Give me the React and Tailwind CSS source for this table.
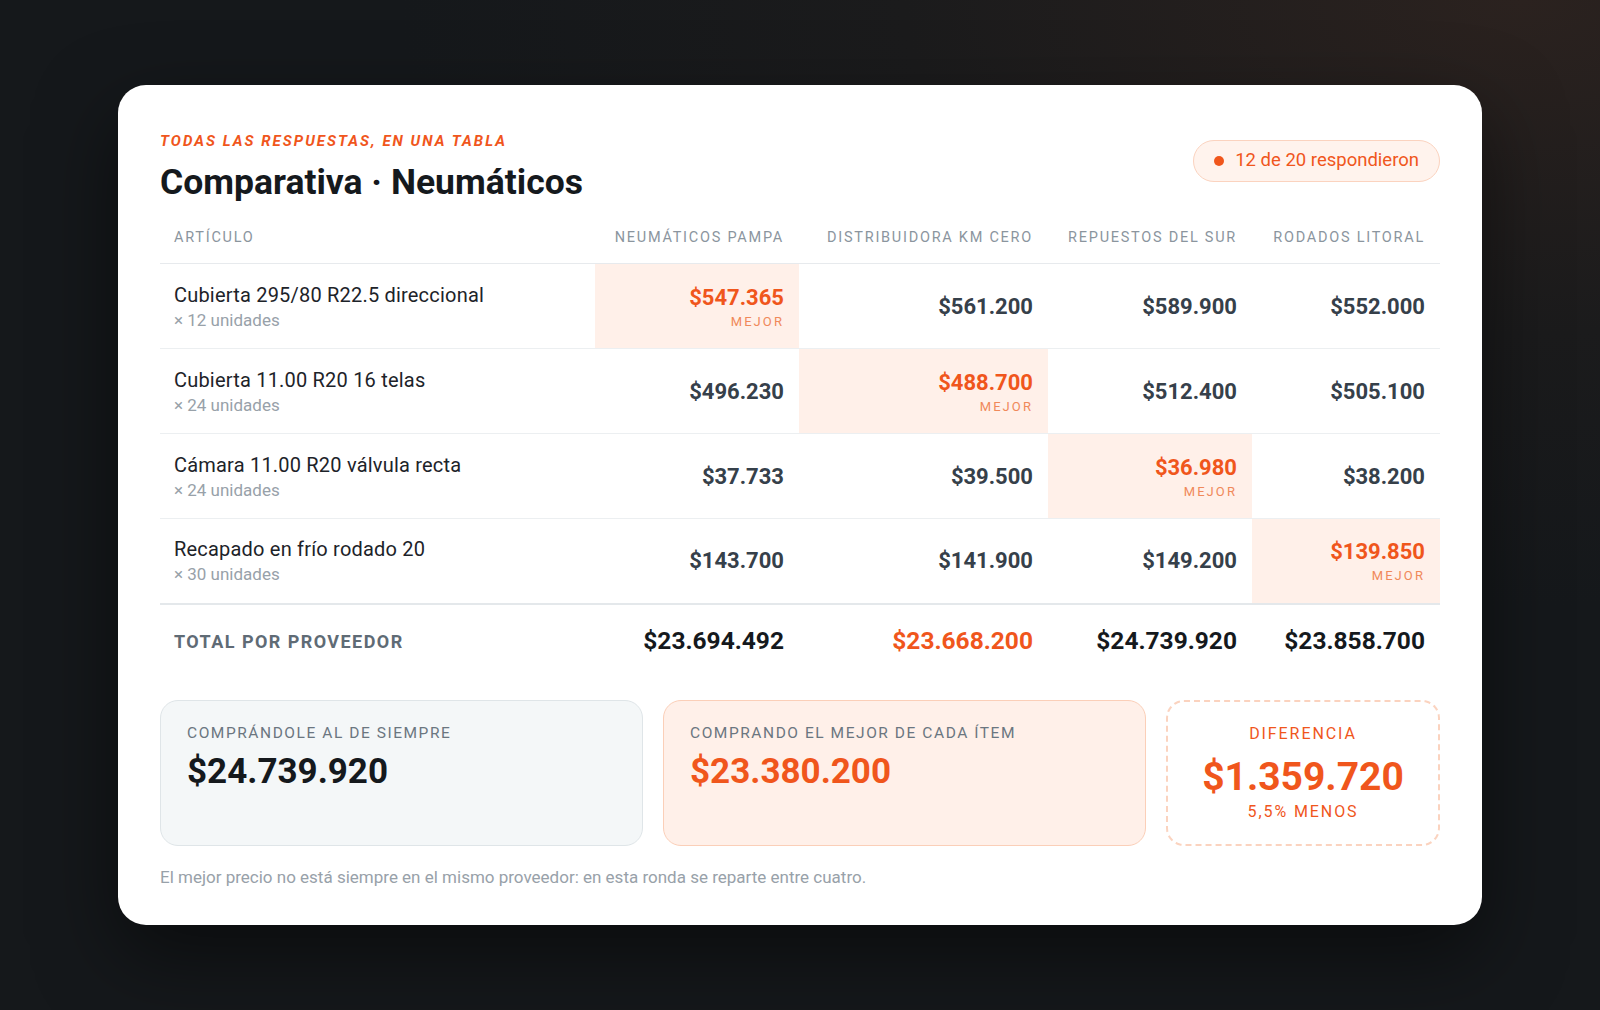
const suppliers = ['Neumáticos Pampa', 'Distribuidora KM Cero', 'Repuestos del Sur', 'Rodados Litoral'];

const rows = [
  { name: 'Cubierta 295/80 R22.5 direccional', qty: '× 12 unidades', prices: ['$547.365', '$561.200', '$589.900', '$552.000'], best: 0 },
  { name: 'Cubierta 11.00 R20 16 telas', qty: '× 24 unidades', prices: ['$496.230', '$488.700', '$512.400', '$505.100'], best: 1 },
  { name: 'Cámara 11.00 R20 válvula recta', qty: '× 24 unidades', prices: ['$37.733', '$39.500', '$36.980', '$38.200'], best: 2 },
  { name: 'Recapado en frío rodado 20', qty: '× 30 unidades', prices: ['$143.700', '$141.900', '$149.200', '$139.850'], best: 3 },
];

const totals = ['$23.694.492', '$23.668.200', '$24.739.920', '$23.858.700'];

const display = "font-['Roboto',_'Liberation_Sans',_sans-serif]";

function PriceCell({ value, best, last }) {
  return (
    <td className={`h-[85px] px-[15px] text-right align-middle ${best ? 'bg-[#fff0e9]' : ''} ${last ? 'border-b-2 border-[#e4e8eb]' : 'border-b border-[#eceff1]'}`}>
      {best ? (
        <div className="flex flex-col items-end pt-[2px]">
          <span className={`${display} text-[22px] font-bold leading-[26px] text-[#f0561c]`}>{value}</span>
          <span className="mt-[3px] text-[13px] leading-[16px] tracking-[0.16em] text-[#f0895a]">MEJOR</span>
        </div>
      ) : (
        <span className={`${display} text-[22px] font-bold text-[#36404a]`}>{value}</span>
      )}
    </td>
  );
}

export default function App() {
  return (
    <div className="flex min-h-[1010px] w-full items-center justify-center bg-[#15181b] bg-[radial-gradient(ellipse_70%_60%_at_95%_0%,#2b221f_0%,#1b1b1c_55%,#15181b_100%)] font-['Roboto',_'Liberation_Sans',_sans-serif]">
      <div className="w-[1364px] rounded-[28px] bg-white px-[42px] pt-[47px] pb-[38px] shadow-[0_30px_80px_rgba(0,0,0,0.5)]">
        <div className="flex items-center justify-between">
          <div>
            <div className={`${display} text-[15px] font-bold italic leading-[18px] tracking-[0.135em] text-[#f0561c]`}>
              TODAS LAS RESPUESTAS, EN UNA TABLA
            </div>
            <h1 className={`${display} mt-[12px] text-[35.5px] font-bold leading-[40px] text-[#15191d]`}>
              Comparativa · Neumáticos
            </h1>
          </div>
          <div className="mb-[13px] flex h-[42px] items-center gap-[11px] rounded-full border border-[#fbd3bf] bg-[#fff3ed] px-[20px] text-[18.5px] text-[#f0561c]">
            <span className="h-[10px] w-[10px] rounded-full bg-[#f0561c]" />
            12 de 20 respondieron
          </div>
        </div>

        <table className="w-full table-fixed border-collapse">
          <colgroup>
            <col />
            <col className="w-[204px]" />
            <col className="w-[249px]" />
            <col className="w-[204px]" />
            <col className="w-[188px]" />
          </colgroup>
          <thead>
            <tr className="border-b border-[#e7eaed]">
              <th className="px-[14px] pt-[25px] pb-[14px] text-left text-[14.5px] font-normal tracking-[0.12em] text-[#8b959e]">ARTÍCULO</th>
              {suppliers.map((s) => (
                <th key={s} className="px-[15px] pt-[25px] pb-[14px] text-right text-[14.5px] font-normal uppercase tracking-[0.12em] text-[#8b959e]">
                  {s}
                </th>
              ))}
            </tr>
          </thead>
          <tbody>
            {rows.map((r, i) => (
              <tr key={r.name}>
                <td className={`px-[14px] align-middle ${i === rows.length - 1 ? 'border-b-2 border-[#e4e8eb]' : 'border-b border-[#eceff1]'}`}>
                  <div className="text-[20px] leading-[26px] tracking-[0.01em] text-[#1d2329]">{r.name}</div>
                  <div className="mt-[1px] text-[17px] leading-[22px] text-[#98a1a9]">{r.qty}</div>
                </td>
                {r.prices.map((p, j) => (
                  <PriceCell key={j} value={p} best={j === r.best} last={i === rows.length - 1} />
                ))}
              </tr>
            ))}
            <tr>
              <td className={`${display} h-[74px] px-[14px] text-[18px] font-bold tracking-[0.08em] text-[#5f6b75]`}>TOTAL POR PROVEEDOR</td>
              {totals.map((t, j) => (
                <td key={t} className={`${display} px-[15px] text-right text-[24.5px] font-bold ${j === 1 ? 'text-[#f0561c]' : 'text-[#15191d]'}`}>
                  {t}
                </td>
              ))}
            </tr>
          </tbody>
        </table>

        <div className="mt-[22px] grid grid-cols-[1fr_1fr_274px] gap-5">
          <div className="h-[146px] rounded-[18px] border border-[#dfe5e8] bg-[#f4f7f8] px-[26px] pt-[22px]">
            <div className="text-[15.5px] leading-[20px] tracking-[0.1em] text-[#6b7680]">COMPRÁNDOLE AL DE SIEMPRE</div>
            <div className={`${display} mt-[7px] text-[35px] font-bold leading-[44px] text-[#15191d]`}>$24.739.920</div>
          </div>
          <div className="h-[146px] rounded-[18px] border border-[#fbcfb8] bg-[#fff0e9] px-[26px] pt-[22px]">
            <div className="text-[15.5px] leading-[20px] tracking-[0.1em] text-[#6b7680]">COMPRANDO EL MEJOR DE CADA ÍTEM</div>
            <div className={`${display} mt-[7px] text-[35px] font-bold leading-[44px] text-[#f0561c]`}>$23.380.200</div>
          </div>
          <div className="flex h-[146px] flex-col items-center justify-center rounded-[18px] border-2 border-dashed border-[#fbd3bf] bg-white">
            <div className="mb-[8px] text-[16px] leading-[20px] tracking-[0.12em] text-[#f0561c]">DIFERENCIA</div>
            <div className={`${display} text-[39px] font-bold leading-[50px] text-[#f0561c]`}>$1.359.720</div>
            <div className="text-[16px] leading-[20px] tracking-[0.12em] text-[#f0561c]">5,5% MENOS</div>
          </div>
        </div>

        <p className="mt-[21px] text-[17px] leading-[20px] text-[#98a1a9]">
          El mejor precio no está siempre en el mismo proveedor: en esta ronda se reparte entre cuatro.
        </p>
      </div>
    </div>
  );
}
